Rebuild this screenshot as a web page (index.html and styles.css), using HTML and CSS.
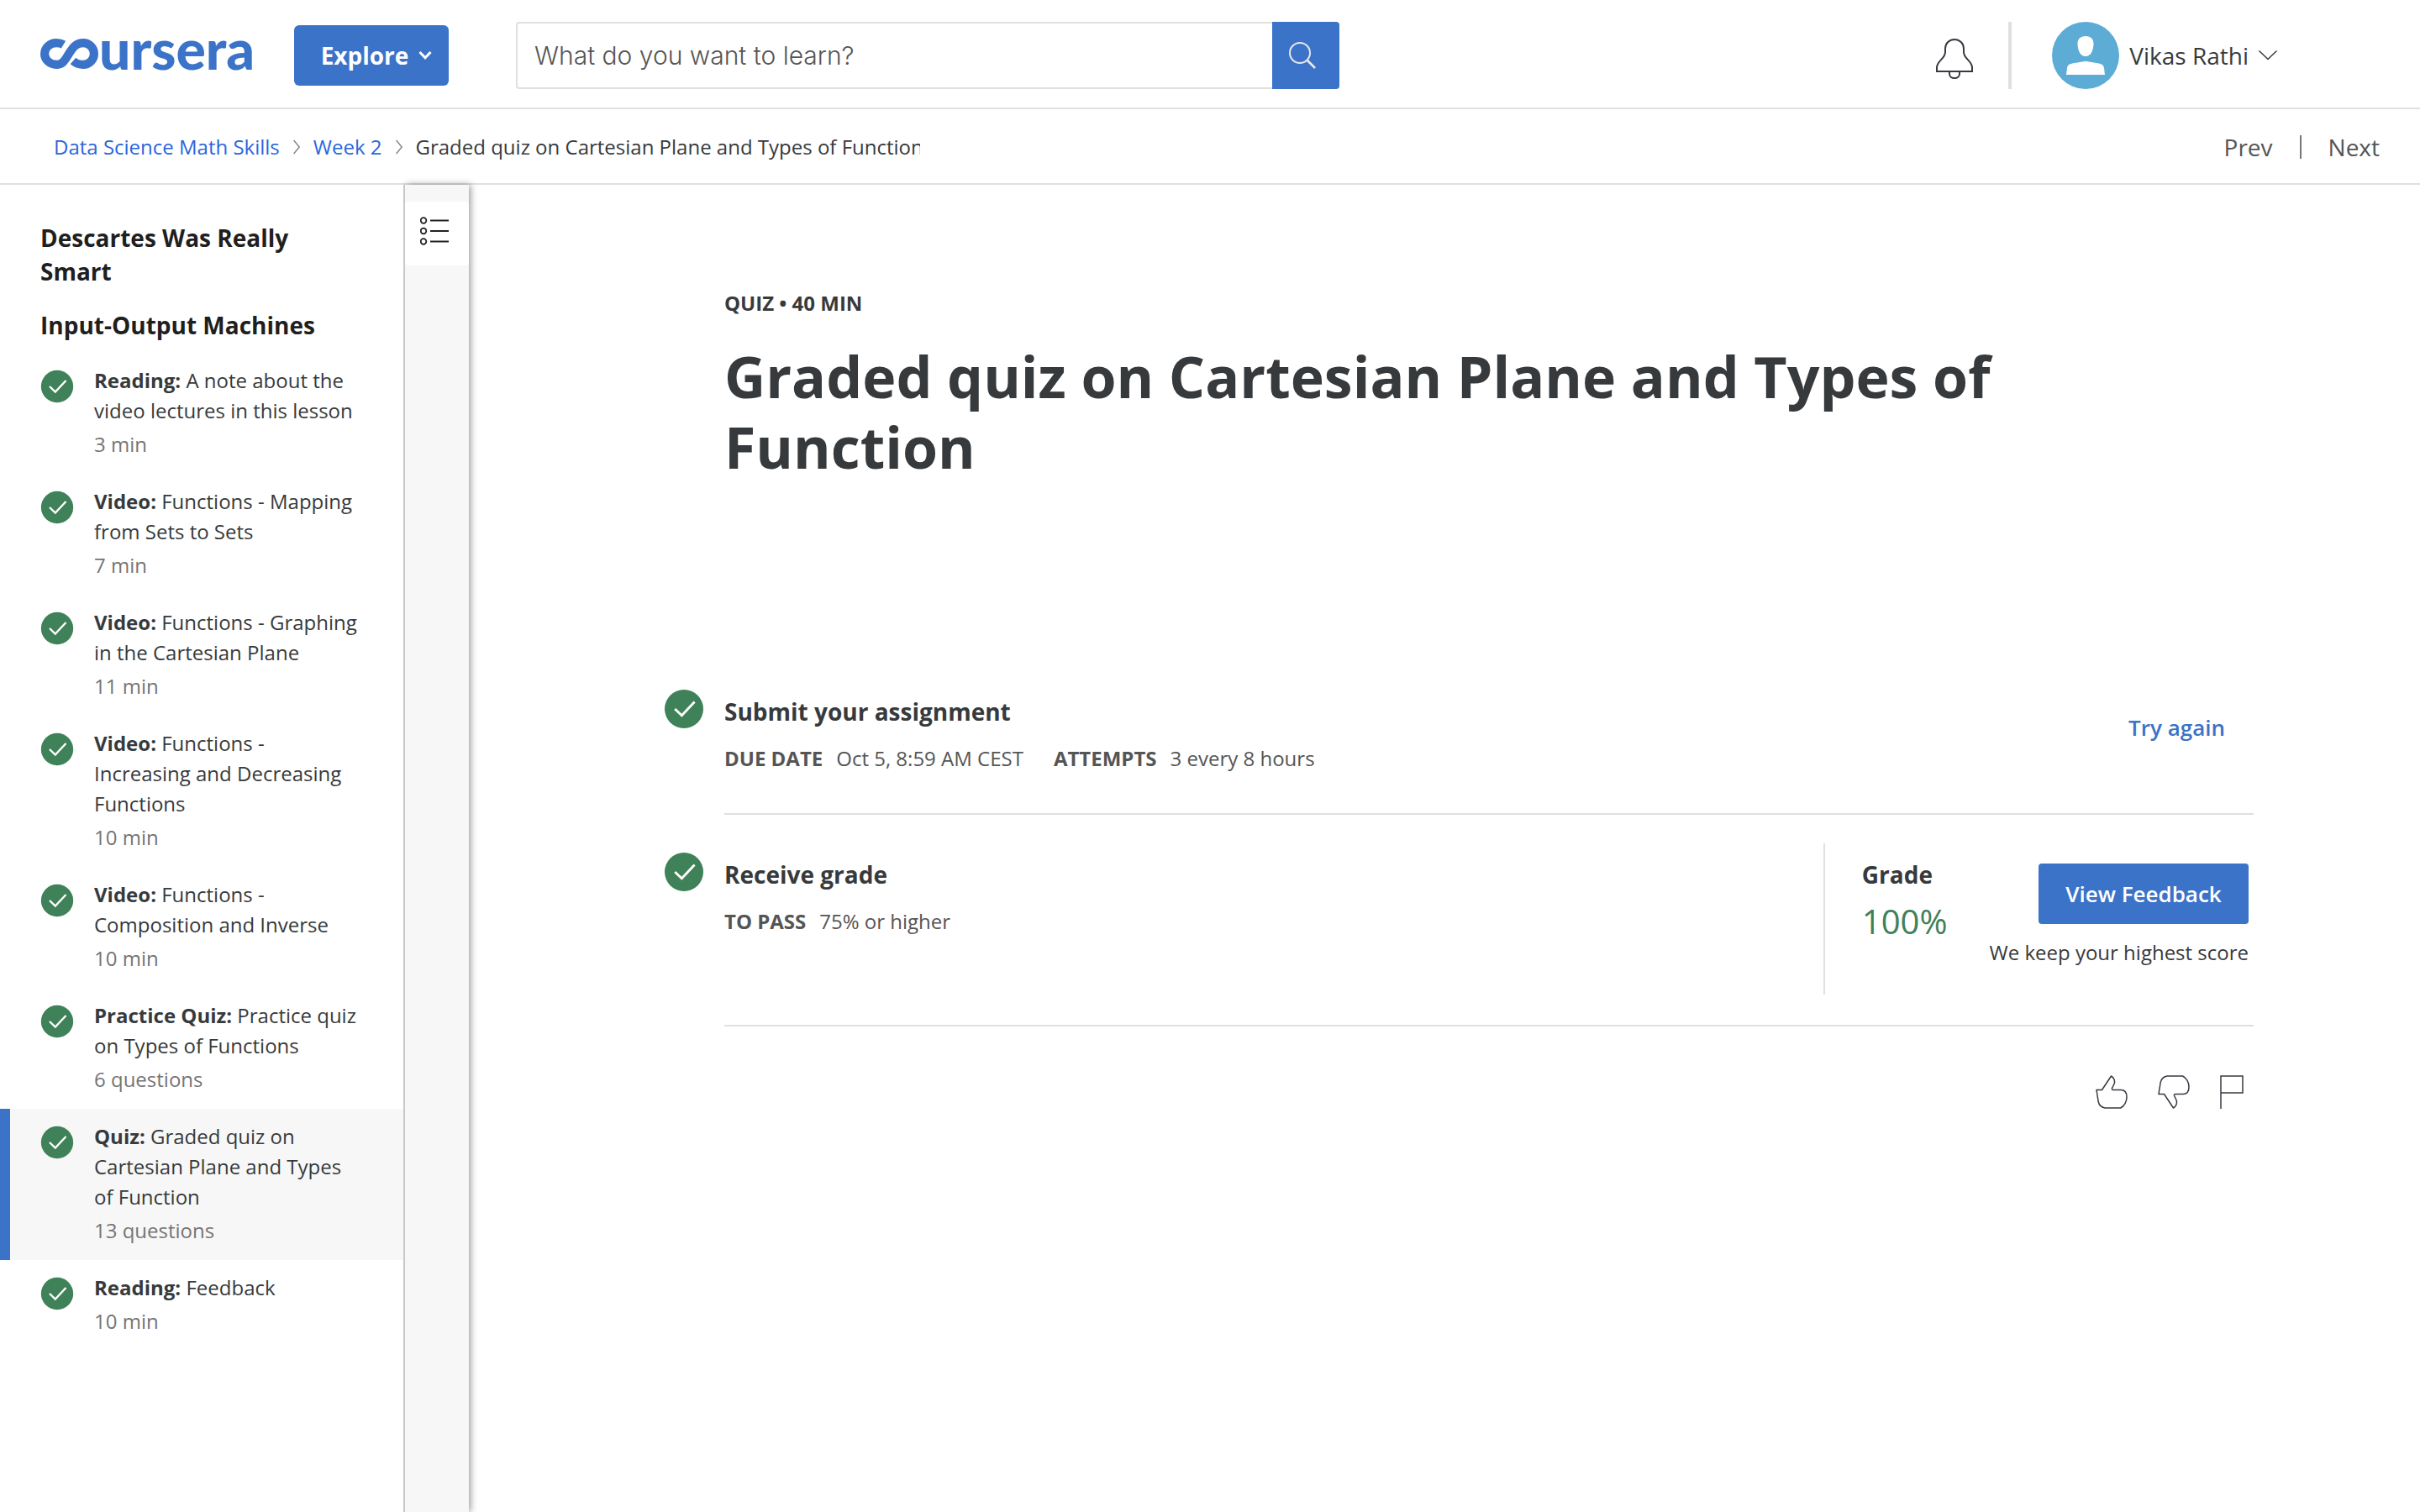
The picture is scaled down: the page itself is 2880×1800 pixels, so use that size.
FILE: index.html
```html
<!DOCTYPE html>
<html lang="en">
<head>
<meta charset="utf-8">
<title>Graded quiz on Cartesian Plane and Types of Function | Coursera</title>
<link rel="stylesheet" href="styles.css">
</head>
<body>
<svg width="0" height="0" class="sprite" aria-hidden="true">
  <symbol id="check" viewBox="0 0 40 40">
    <circle cx="20" cy="20" r="19.200" fill="#3f8158"/>
    <path d="M11 20L17.800 26.500L30.500 13" fill="none" stroke="#fff" stroke-width="2.400"/>
  </symbol>
  <symbol id="thumb" viewBox="0 0 38 40">
    <path d="M1 17.500H7.500L18.500 1C22 3 23.500 7 22 10.500L19.500 15.500Q19 17.500 21 17.500H30C35 17.500 37 21 37 26C37 31.500 34 37 29.500 39H11C6.500 38 4 35.500 3.200 31.500Z" fill="none" stroke="#373a42" stroke-width="1.500" stroke-linejoin="round"/>
  </symbol>
</svg>

<header class="topbar">
  <a class="logo" href="#" aria-label="Coursera">
    <svg class="logo-mark" viewBox="0 0 70 36" aria-hidden="true">
      <path d="M27.500 7.200C25 5.700 22 5.100 19 5.100A13.900 12.900 0 0 0 19 30.900C27 30.900 29.500 25 34 18S42 5.100 51 5.100A12.900 12.900 0 0 1 51 30.900C46 30.900 42.500 29.500 39 26.500" fill="none" stroke="#3b73c8" stroke-width="10.200"/>
    </svg>
    <span class="logo-word">ursera</span>
  </a>
  <button class="explore" type="button">Explore
    <svg width="16" height="12" viewBox="0 0 16 12" aria-hidden="true"><path d="M1.500 2L8 8.800L14.500 2" fill="none" stroke="#fff" stroke-width="3"/></svg>
  </button>
  <form class="search">
    <input class="search-input" type="text" placeholder="What do you want to learn?" aria-label="Search">
    <button class="search-button" type="button" aria-label="Submit search">
      <svg width="32" height="32" viewBox="0 0 32 32" aria-hidden="true"><circle cx="13" cy="13" r="12" fill="none" stroke="#e8e8e8" stroke-width="2"/><path d="M21.500 21.500L31 31" stroke="#e8e8e8" stroke-width="2.600"/></svg>
    </button>
  </form>
  <div class="account">
    <button class="plain bell" type="button" aria-label="Notifications">
      <svg width="44" height="48" viewBox="0 0 44 48" aria-hidden="true"><path d="M1 39V34C1.500 26 11 24 11 16V12C11 5.500 16 1 22 1S33 5.500 33 12V16C33 24 42.500 26 43 34V39Z" fill="none" stroke="#373a42" stroke-width="2"/><path d="M16 39V42C16 45 18.500 47 22 47S28 45 28 42V39" fill="none" stroke="#373a42" stroke-width="2"/></svg>
    </button>
    <button class="plain user" type="button">
      <svg width="80" height="80" viewBox="0 0 80 80" aria-hidden="true"><circle cx="40" cy="40" r="40" fill="#5cacd6"/><path d="M40 17C46 17 50 20.500 49.500 27C49 34 46.500 41 40 41S31 34 30.500 27C30 20.500 34 17 40 17Z" fill="#fff"/><path d="M17 63L18 55C18.600 51.500 20.500 50.500 24 49.500L39 47H41L56 49.500C59.500 50.500 61.400 51.500 62 55L63 63Z" fill="#fff"/></svg>
      <span>Vikas Rathi</span>
      <svg width="22" height="12" viewBox="0 0 22 12" aria-hidden="true"><path d="M.5 .5L11 10.500L21.500 .5" fill="none" stroke="#373a42" stroke-width="1.500"/></svg>
    </button>
  </div>
</header>

<div class="subbar">
  <nav class="crumbs" aria-label="Breadcrumb">
    <a href="#">Data Science Math Skills</a>
    <svg width="8" height="18" viewBox="0 0 8 18" aria-hidden="true"><path d="M.6 1L7.200 9L.6 17" fill="none" stroke="#888" stroke-width="1.500"/></svg>
    <a href="#">Week 2</a>
    <svg width="8" height="18" viewBox="0 0 8 18" aria-hidden="true"><path d="M.6 1L7.200 9L.6 17" fill="none" stroke="#888" stroke-width="1.500"/></svg>
    <span class="crumb-current">Graded quiz on Cartesian Plane and Types of Function</span>
  </nav>
  <nav class="pager" aria-label="Items">
    <a href="#">Prev</a>
    <a href="#">Next</a>
  </nav>
</div>

<div class="page">
  <aside class="sidebar">
    <h2>Descartes Was Really Smart</h2>
    <h3>Input-Output Machines</h3>
    <ul class="items">
      <li><a class="item" href="#"><svg class="item-check"><use href="#check"/></svg><span class="item-text"><span><b>Reading:</b> A note about the video lectures in this lesson</span><span class="meta">3 min</span></span></a></li>
      <li><a class="item" href="#"><svg class="item-check"><use href="#check"/></svg><span class="item-text"><span><b>Video:</b> Functions - Mapping from Sets to Sets</span><span class="meta">7 min</span></span></a></li>
      <li><a class="item" href="#"><svg class="item-check"><use href="#check"/></svg><span class="item-text"><span><b>Video:</b> Functions - Graphing in the Cartesian Plane</span><span class="meta">11 min</span></span></a></li>
      <li><a class="item" href="#"><svg class="item-check"><use href="#check"/></svg><span class="item-text"><span><b>Video:</b> Functions - Increasing and Decreasing Functions</span><span class="meta">10 min</span></span></a></li>
      <li><a class="item" href="#"><svg class="item-check"><use href="#check"/></svg><span class="item-text"><span><b>Video:</b> Functions - Composition and Inverse</span><span class="meta">10 min</span></span></a></li>
      <li><a class="item" href="#"><svg class="item-check"><use href="#check"/></svg><span class="item-text"><span><b>Practice Quiz:</b> Practice quiz on Types of Functions</span><span class="meta">6 questions</span></span></a></li>
      <li><a class="item item-active" href="#" aria-current="page"><svg class="item-check"><use href="#check"/></svg><span class="item-text"><span><b>Quiz:</b> Graded quiz on Cartesian Plane and Types of Function</span><span class="meta">13 questions</span></span></a></li>
      <li><a class="item" href="#"><svg class="item-check"><use href="#check"/></svg><span class="item-text"><span><b>Reading:</b> Feedback</span><span class="meta">10 min</span></span></a></li>
    </ul>
  </aside>
  <div class="rail">
    <button class="rail-tab" type="button" aria-label="Lesson items">
      <svg width="36" height="34" viewBox="0 0 36 34" aria-hidden="true" fill="none" stroke="#222" stroke-width="1.800"><circle cx="4" cy="4.500" r="3.300"/><circle cx="4" cy="17" r="3.300"/><circle cx="4" cy="29.500" r="3.300"/><path d="M12 4.500H34M12 17H34M12 29.500H34"/></svg>
    </button>
  </div>
  <main class="main">
    <div class="intro">
      <p class="kind">QUIZ • 40 MIN</p>
      <h1>Graded quiz on Cartesian Plane and Types of Function</h1>
    </div>
    <section class="step">
      <svg class="step-check"><use href="#check"/></svg>
      <div class="step-body">
        <div>
          <h2>Submit your assignment</h2>
          <dl class="facts">
            <div><dt>DUE DATE</dt><dd>Oct 5, 8:59 AM CEST</dd></div>
            <div><dt>ATTEMPTS</dt><dd>3 every 8 hours</dd></div>
          </dl>
        </div>
        <button class="retry" type="button">Try again</button>
      </div>
    </section>
    <section class="step">
      <svg class="step-check"><use href="#check"/></svg>
      <div class="step-body">
        <div>
          <h2>Receive grade</h2>
          <dl class="facts">
            <div><dt>TO PASS</dt><dd>75% or higher</dd></div>
          </dl>
        </div>
        <div class="grade">
          <div>
            <h2>Grade</h2>
            <p class="score">100%</p>
          </div>
          <div class="feedback">
            <button class="primary" type="button">View Feedback</button>
            <p>We keep your highest score</p>
          </div>
        </div>
      </div>
    </section>
    <div class="reactions">
      <button class="plain" type="button" aria-label="Like"><svg width="38" height="40"><use href="#thumb"/></svg></button>
      <button class="plain" type="button" aria-label="Dislike"><svg width="38" height="40" viewBox="0 0 38 40"><use href="#thumb" width="38" height="40" transform="translate(0 40) scale(1 -1)"/></svg></button>
      <button class="plain" type="button" aria-label="Report"><svg width="28" height="40" viewBox="0 0 28 40"><path d="M1 40V1H27V21H1" fill="none" stroke="#373a42" stroke-width="1.500"/></svg></button>
    </div>
  </main>
</div>
</body>
</html>
```
FILE: styles.css
```css
* { box-sizing: border-box; }

body {
  margin: 0;
  min-height: 100vh;
  display: flex;
  flex-direction: column;
  background: #fff;
  color: #373a3c;
  font-family: "Open Sans", "Noto Sans", sans-serif;
  font-size: 24px;
  line-height: 36px;
}

h1, h2, h3, p, ul, dl, dd { margin: 0; padding: 0; }
h2, h3 { font-size: 28px; line-height: 40px; font-weight: 700; }
ul { list-style: none; }
a { color: inherit; text-decoration: none; }
svg { display: block; flex: none; }
button, input { font: inherit; color: inherit; }
.sprite { position: absolute; }

.plain {
  padding: 0;
  border: 0;
  background: none;
}

/* Top bar */
.topbar {
  display: flex;
  align-items: center;
  padding: 26px 170px 22px 48px;
  border-bottom: 2px solid #e0e0e0;
}

.logo {
  display: flex;
  align-items: center;
  height: 80px;
  width: 302px;
  padding-bottom: 4px;
  color: #3b73c8;
}
.logo-mark { width: 70px; height: 36px; }
.logo-word {
  padding-bottom: 12px;
  font-family: Lato, sans-serif;
  font-weight: 900;
  font-size: 66px;
  line-height: 64px;
}

.explore {
  display: flex;
  align-items: center;
  justify-content: center;
  gap: 12px;
  width: 184px;
  height: 72px;
  padding: 0 0 0 12px;
  border: 0;
  border-radius: 6px;
  background: #3b73c8;
  color: #fff;
  font-size: 28px;
  font-weight: 700;
}

.search {
  display: flex;
  width: 980px;
  height: 80px;
  margin-left: 80px;
}
.search-input {
  flex: 1;
  min-width: 0;
  padding: 0 20px;
  border: 2px solid #e0e0e0;
  border-right: 0;
  border-radius: 4px 0 0 4px;
  font-family: Inter, "Liberation Sans", sans-serif;
  font-size: 30px;
  font-weight: 300;
}
.search-input::placeholder { color: #555; opacity: 1; }
.search-button {
  display: flex;
  align-items: center;
  justify-content: center;
  width: 80px;
  padding: 0 8px 0 0;
  border: 0;
  border-radius: 0 4px 4px 0;
  background: #3b73c8;
}

.account {
  display: flex;
  align-items: center;
  gap: 42px;
  margin-left: auto;
}
.bell { padding-top: 8px; }
.user {
  display: flex;
  align-items: center;
  gap: 12px;
  padding-left: 48px;
  border-left: 4px solid #e0e0e0;
  font-size: 28px;
}

/* Breadcrumb bar */
.subbar {
  display: flex;
  align-items: center;
  justify-content: space-between;
  height: 90px;
  padding: 2px 48px 0 64px;
  border-bottom: 2px solid #e0e0e0;
}
.crumbs {
  display: flex;
  align-items: center;
  gap: 16px;
}
.crumbs a { color: #2a66dd; }
.crumb-current {
  max-width: 600px;
  overflow: hidden;
  white-space: nowrap;
}
.pager {
  display: flex;
  align-items: center;
  color: #555;
  font-size: 28px;
  line-height: 28px;
}
.pager a + a {
  margin-left: 32px;
  padding-left: 32px;
  border-left: 2px solid #777;
}

/* Sidebar */
.page {
  flex: 1;
  display: flex;
}
.sidebar {
  position: relative;
  z-index: 1;
  width: 482px;
  padding-top: 43px;
  border-right: 2px solid #c8c8c8;
  background: #fff;
  color: #1f1f1f;
}
.sidebar h2, .sidebar h3 { padding: 0 48px; }
.sidebar h2 { margin-bottom: 24px; }
.sidebar h3 { margin-bottom: 13px; }
.item {
  display: flex;
  gap: 24px;
  padding: 15px 48px 17px 36px;
  border-left: 12px solid transparent;
  color: #373a3c;
}
.item-active {
  border-left-color: #3b73c8;
  background: #f7f7f7;
}
.item-check {
  width: 40px;
  height: 40px;
  margin-top: 5px;
}
.item-text {
  display: flex;
  flex-direction: column;
  gap: 4px;
}
.meta { color: #757575; }

.rail {
  width: 76px;
  padding-top: 20px;
  background: #f7f7f7;
  box-shadow: 2px 0 8px rgba(0, 0, 0, 0.4);
}
.rail-tab {
  display: flex;
  width: 76px;
  height: 76px;
  padding: 18px;
  border: 0;
  border-radius: 4px;
  background: #fff;
}

/* Assignment */
.main {
  flex: 1;
  padding: 123px 198px 0 232px;
}
.intro { padding-left: 72px; margin-bottom: 202px; }
.kind { font-weight: 700; }
h1 {
  margin-top: 27px;
  max-width: 1600px;
  font-size: 68px;
  line-height: 84px;
  font-weight: 700;
}
.step {
  display: flex;
  gap: 24px;
}
.step-check {
  width: 48px;
  height: 48px;
  margin-top: 44px;
}
.step-body {
  flex: 1;
  display: flex;
  justify-content: space-between;
  min-height: 194px;
  padding: 34px 0 36px;
  border-bottom: 2px solid #e0e0e0;
}
.step-body h2 { margin-top: 17px; }
.facts {
  display: flex;
  gap: 36px;
  margin-top: 18px;
  color: #555;
}
.facts div { display: flex; gap: 16px; }
.facts dt { font-weight: 700; }

.retry {
  align-self: flex-start;
  height: 112px;
  padding: 0 34px;
  border: 0;
  background: none;
  color: #3b73c8;
  font-size: 26px;
  font-weight: 600;
}
.grade {
  display: flex;
  gap: 50px;
  height: 180px;
  padding: 0 6px 0 44px;
  border-left: 2px solid #e0e0e0;
}
.score {
  margin-top: 12px;
  color: #3f8158;
  font-size: 40px;
  line-height: 48px;
}
.feedback {
  display: flex;
  flex-direction: column;
  align-items: flex-end;
  gap: 16px;
  padding-top: 24px;
}
.primary {
  width: 250px;
  height: 72px;
  padding: 0;
  border: 0;
  border-radius: 4px;
  background: #3b73c8;
  color: #fff;
  font-size: 26px;
  font-weight: 600;
}
.reactions {
  display: flex;
  justify-content: flex-end;
  gap: 36px;
  padding: 58px 12px 58px 0;
}
```
